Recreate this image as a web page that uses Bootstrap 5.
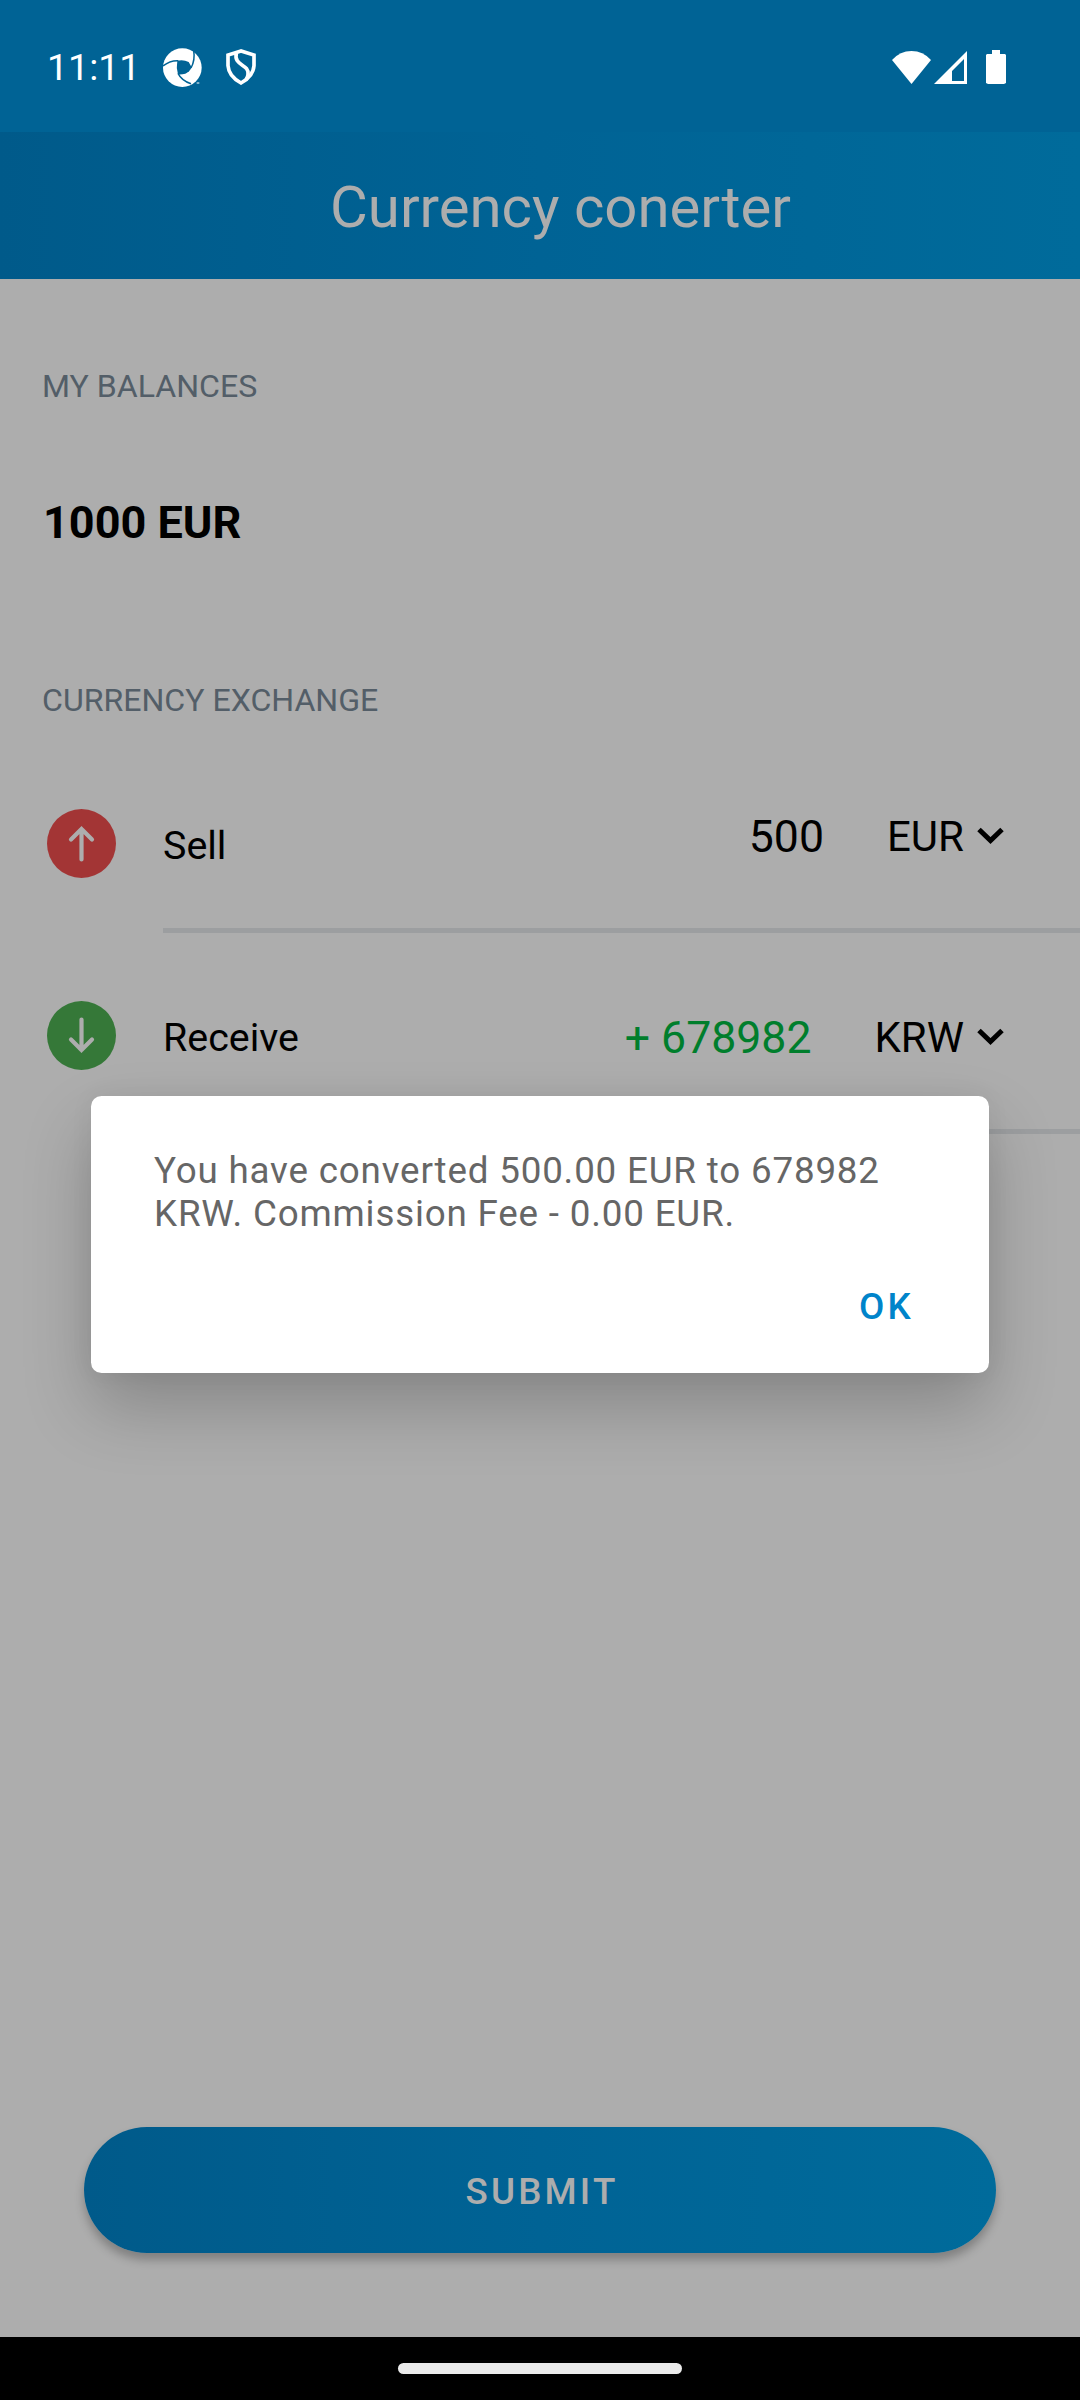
<!DOCTYPE html>
<html lang="en">
<head>
<meta charset="utf-8">
<meta name="viewport" content="width=device-width, initial-scale=1">
<title>Currency converter</title>
<link rel="stylesheet" href="https://cdn.jsdelivr.net/npm/bootstrap@5.3.0/dist/css/bootstrap.min.css">
<style>
  body { font-family: Roboto, "Noto Sans", sans-serif; background: #adadad; color: #000; width: 1080px; height: 2400px; overflow: hidden; }
  svg { display: block; flex: none; }
  .status-bar { height: 132px; background: #006395; padding: 2px 74px 0 47px; color: #fff; }
  .clock { font-size: 37.5px; line-height: 44px; width: 116px; }
  .signal-icon { margin-left: 3px; }
  .battery-icon { margin-left: 19px; }
  .app-header { height: 147px; background: linear-gradient(90deg, #005a8a, #006395 50%, #006b9b); color: #adadad; padding: 3px 0 0 41px; }
  .app-title { font-size: 58.1px; font-weight: 400; line-height: 68px; }
  .content { padding-top: 88px; }
  .section-label { margin: 0 42px; font-size: 32.1px; line-height: 38px; color: #535e68; font-weight: 400; }
  .balance { margin: 92px 42px 132px 43px; font-size: 45px; line-height: 52px; font-weight: 700; }
  .pair-row { padding-left: 47px; padding-right: 76px; height: 69px; }
  .sell-row { margin: 90px 0 50px; }
  .receive-row { margin: 68px 0 59px; }
  .pair-name { margin-left: 47px; padding-top: 4px; font-size: 39.4px; line-height: 48px; }
  .pair-value { gap: 63px; }
  .sell-row .pair-value { margin-bottom: 14px; }
  .receive-row .pair-value { margin-top: 4px; }
  .amount { font-size: 44.6px; line-height: 52px; }
  .currency { gap: 13px; font-size: 42px; line-height: 50px; }
  .currency svg { margin-bottom: 3px; }
  .gain { color: #007e2c; }
  .rule { height: 5px; margin-left: 163px; background: #9c9ea0; }
  .submit { width: 912px; height: 126px; margin-bottom: 84px; padding: 3px 0 0 4px; border: 0; border-radius: 63px; color: #adadad; font-size: 36.75px; font-weight: 500; letter-spacing: 3.2px; line-height: 44px; background: linear-gradient(90deg, #005a8a, #006395 50%, #006b9b); box-shadow: 0 7px 10px rgba(0,0,0,.26); }
  .nav-strip { height: 63px; background: #000; }
  .nav-pill { width: 284px; height: 11px; border-radius: 6px; background: #ebebeb; }
  .message-box { left: 91px; top: 1096px; width: 898px; height: 277px; border-radius: 10.5px; background: #fff; padding: 53px 60px 0 63px; box-shadow: 0 34px 68px rgba(0,0,0,.22), 0 0 24px rgba(0,0,0,.05); }
  .message-text { font-size: 36.75px; line-height: 43px; letter-spacing: .82px; color: #666; }
  .message-ok { margin-top: 47px; padding: 0 15px 0 0; border: 0; font-size: 36.75px; line-height: 50px; font-weight: 500; letter-spacing: 3.28px; color: #0084ca; }
</style>
</head>
<body class="d-flex flex-column position-relative">
  <div class="status-bar d-flex align-items-center">
    <span class="clock">11:11</span>
    <svg width="39" height="39" viewBox="0 0 117 117">
      <circle cx="58" cy="59" r="58" fill="#fff"/>
      <path d="M43 38Q62 34 77 42L86 58Q80 72 67 77Q56 80 45 79Q39 58 43 38Z" fill="#006395"/>
      <g fill="none" stroke="#006395" stroke-width="4.5"><path d="M0 54Q20 37 46 38"/><path d="M84 60Q97 36 92 8"/><path d="M45 76Q56 98 84 107"/></g>
      <path d="M85 117Q92 106 117 99V117Z" fill="#006395"/><path d="M101 105h8" stroke="#fff" stroke-width="3"/>
    </svg>
    <svg class="ms-4" width="30" height="36" viewBox="0 0 90 108" fill="none" stroke="#fff" stroke-width="11">
      <path d="M45 6L6 18V50Q8 82 45 102Q82 82 84 50V18Z"/><path d="M31 12C22 52 70 44 66 76Q66 84 60 92"/>
    </svg>
    <svg class="ms-auto" width="39" height="33" viewBox="0 0 39 33" fill="#fff"><path d="M19.5 33L0 9Q8 0 19.5 0T39 9Z"/></svg>
    <svg class="signal-icon" width="33" height="33" viewBox="0 0 33 33" fill="#fff"><path fill-rule="evenodd" d="M33 0V33H0ZM30 8L18 20V30H30Z"/></svg>
    <svg class="battery-icon" width="20" height="34" viewBox="0 0 20 34" fill="#fff"><path d="M6 0H14V4H19L20 5V33L18 34H2L0 33V5L1 4H6Z"/></svg>
  </div>
  <header class="app-header d-flex align-items-center justify-content-center"><h1 class="app-title m-0">Currency conerter</h1></header>
  <main class="content d-flex flex-column flex-grow-1">
    <h2 class="section-label">MY BALANCES</h2>
    <div class="balance">1000 EUR</div>
    <h2 class="section-label">CURRENCY EXCHANGE</h2>
    <div class="pair-row sell-row d-flex align-items-center">
      <svg width="69" height="69" viewBox="0 0 69 69"><circle cx="34.5" cy="34.5" r="34.5" fill="#a33535"/><path d="M34.5 50.5V20M24 30.5L34.5 20L45 30.5" fill="none" stroke="#adadad" stroke-width="4.2" stroke-linecap="round"/></svg>
      <span class="pair-name">Sell</span>
      <div class="pair-value d-flex align-items-center ms-auto">
        <span class="amount">500</span>
        <span class="currency d-flex align-items-center">EUR <svg width="27" height="17" viewBox="0 0 27 17"><path d="M2 2.5L13.5 13.5L25 2.5" fill="none" stroke="#000" stroke-width="5"/></svg></span>
      </div>
    </div>
    <div class="rule"></div>
    <div class="pair-row receive-row d-flex align-items-center">
      <svg width="69" height="69" viewBox="0 0 69 69"><circle cx="34.5" cy="34.5" r="34.5" fill="#357838"/><path d="M34.5 18.5V49M24 38.5L34.5 49L45 38.5" fill="none" stroke="#adadad" stroke-width="4.2" stroke-linecap="round"/></svg>
      <span class="pair-name">Receive</span>
      <div class="pair-value d-flex align-items-center ms-auto">
        <span class="amount gain">+ 678982</span>
        <span class="currency d-flex align-items-center">KRW <svg width="27" height="17" viewBox="0 0 27 17"><path d="M2 2.5L13.5 13.5L25 2.5" fill="none" stroke="#000" stroke-width="5"/></svg></span>
      </div>
    </div>
    <div class="rule"></div>
    <button type="button" class="submit btn mt-auto align-self-center">SUBMIT</button>
  </main>
  <footer class="nav-strip d-flex justify-content-center align-items-center"><div class="nav-pill"></div></footer>

  <div class="message-box position-absolute d-flex flex-column" role="alertdialog">
    <p class="message-text m-0">You have converted 500.00 EUR to 678982 KRW. Commission Fee - 0.00 EUR.</p>
    <button type="button" class="message-ok btn align-self-end">OK</button>
  </div>
  <script src="https://cdn.jsdelivr.net/npm/bootstrap@5.3.0/dist/js/bootstrap.bundle.min.js"></script>
</body>
</html>
